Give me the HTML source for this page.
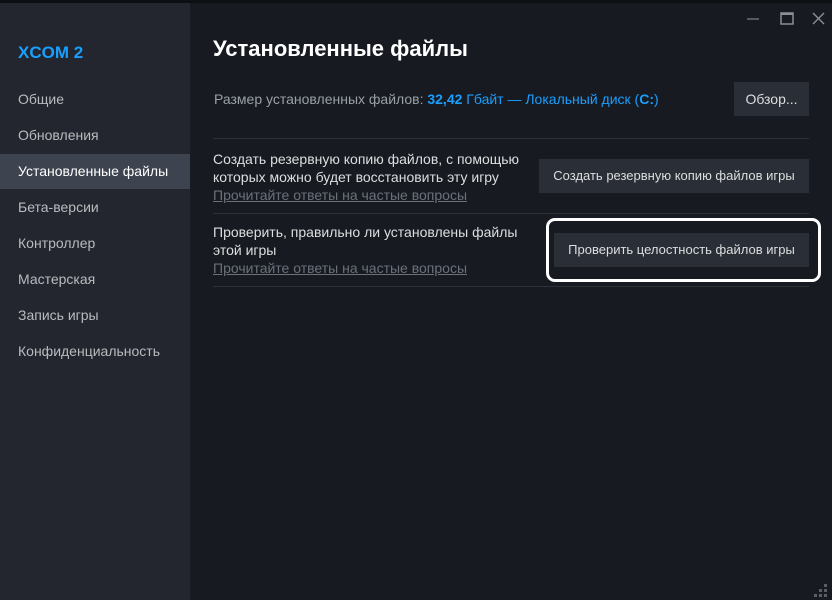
<!DOCTYPE html>
<html><head><meta charset="utf-8"><style>
*{margin:0;padding:0;box-sizing:border-box}
body{width:832px;height:600px;background:#171a21;font-family:"Liberation Sans",sans-serif;position:relative;overflow:hidden;color:#dcdedf}
.topline{position:absolute;left:0;top:0;width:832px;height:3px;background:#0d0f13}
.side{position:absolute;left:0;top:3px;width:190px;height:597px;background:#23262e}
.logo{position:absolute;left:18px;top:40px;font-size:17px;font-weight:bold;color:#1a9fff}
.item{position:absolute;left:0;width:190px;height:35px;line-height:35px;padding-left:18px;font-size:14px;color:#b8bcbf}
.item.sel{background:#3d4450;color:#fff}
.t{position:absolute;font-size:14px;color:#dcdedf}
h1{position:absolute;left:213px;top:36px;font-size:22px;font-weight:bold;color:#fff}
.btn{position:absolute;background:#2a2e36;color:#dcdedf;font-size:13px;text-align:center}
.hr{position:absolute;left:213px;width:596px;height:1px;background:#2c3038}
.link{color:#6b717a;text-decoration:underline}
</style></head><body>
<div class="topline"></div>
<div class="side">
<div class="logo">XCOM 2</div>
<div class="item" style="top:79px">Общие</div>
<div class="item" style="top:115px">Обновления</div>
<div class="item sel" style="top:151px">Установленные файлы</div>
<div class="item" style="top:187px">Бета-версии</div>
<div class="item" style="top:223px">Контроллер</div>
<div class="item" style="top:259px">Мастерская</div>
<div class="item" style="top:295px">Запись игры</div>
<div class="item" style="top:331px">Конфиденциальность</div>
</div>
<svg style="position:absolute;left:745px;top:12px" width="80" height="14">
<line x1="2" y1="7" x2="14" y2="7" stroke="#6b7078" stroke-width="1.5"/>
<rect x="36" y="1" width="12" height="11" fill="none" stroke="#8b9096" stroke-width="1.5"/><line x1="36" y1="2" x2="48" y2="2" stroke="#8b9096" stroke-width="2"/>
<path d="M68 1L79 12M79 1L68 12" stroke="#8b9096" stroke-width="1.4"/>
</svg>
<h1>Установленные файлы</h1>
<div class="t" style="left:214px;top:91px;color:#9aa0a6">Размер установленных файлов: <b style="color:#1a9fff">32,42</b> <span style="color:#1a9fff">Гбайт — Локальный диск (<b>C:</b>)</span></div>
<div class="btn" style="left:734px;top:82px;width:75px;height:34px;line-height:34px;font-size:14px">Обзор...</div>
<div class="hr" style="top:138px"></div>
<div class="t" style="left:213px;top:150px;line-height:18px">Создать резервную копию файлов, с помощью<br>которых можно будет восстановить эту игру<br><span class="link">Прочитайте ответы на частые вопросы</span></div>
<div class="btn" style="left:539px;top:159px;width:270px;height:34px;line-height:34px">Создать резервную копию файлов игры</div>
<div class="hr" style="top:213px"></div>
<div class="t" style="left:213px;top:223px;line-height:18px">Проверить, правильно ли установлены файлы<br>этой игры<br><span class="link">Прочитайте ответы на частые вопросы</span></div>
<div style="position:absolute;left:546px;top:218px;width:275px;height:64px;border:3px solid #fff;border-radius:9px"></div>
<div class="btn" style="left:554px;top:233px;width:255px;height:34px;line-height:34px">Проверить целостность файлов игры</div>
<div class="hr" style="top:286px"></div>
<svg style="position:absolute;left:814px;top:582px" width="16" height="16" fill="#5a5f66">
<rect x="10" y="2" width="3" height="3"/><rect x="5" y="7" width="3" height="3"/><rect x="10" y="7" width="3" height="3"/><rect x="0" y="12" width="3" height="3"/><rect x="5" y="12" width="3" height="3"/><rect x="10" y="12" width="3" height="3"/>
</svg>
</body></html>
